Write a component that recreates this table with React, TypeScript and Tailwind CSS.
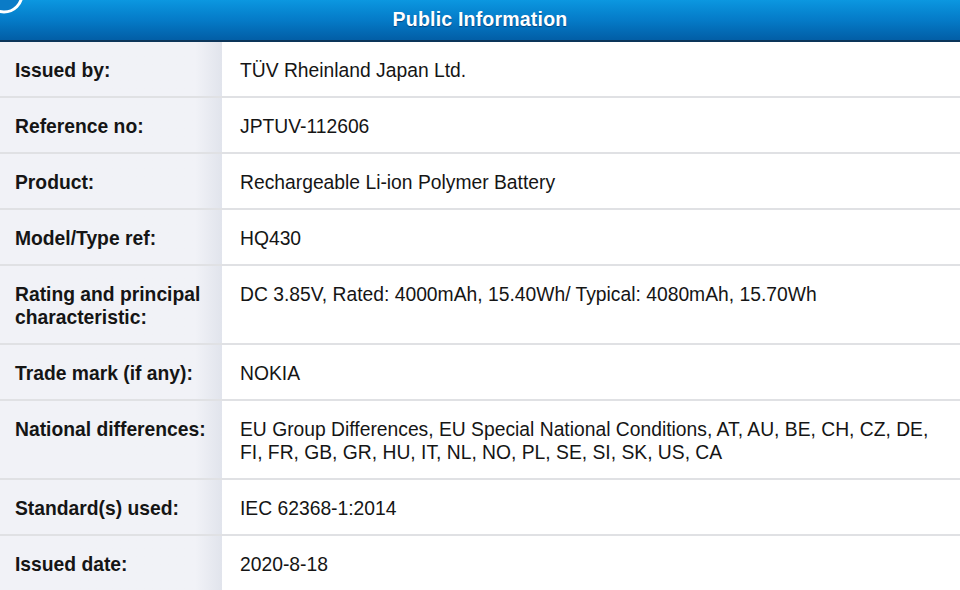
import React from "react";

type Row = { label: string; value: string };

const rows: Row[] = [
  { label: "Issued by:", value: "TÜV Rheinland Japan Ltd." },
  { label: "Reference no:", value: "JPTUV-112606" },
  { label: "Product:", value: "Rechargeable Li-ion Polymer Battery" },
  { label: "Model/Type ref:", value: "HQ430" },
  {
    label: "Rating and principal characteristic:",
    value: "DC 3.85V, Rated: 4000mAh, 15.40Wh/ Typical: 4080mAh, 15.70Wh",
  },
  { label: "Trade mark (if any):", value: "NOKIA" },
  {
    label: "National differences:",
    value:
      "EU Group Differences, EU Special National Conditions, AT, AU, BE, CH, CZ, DE, FI, FR, GB, GR, HU, IT, NL, NO, PL, SE, SI, SK, US, CA",
  },
  { label: "Standard(s) used:", value: "IEC 62368-1:2014" },
  { label: "Issued date:", value: "2020-8-18" },
];

const Header = () => {
  return (
    <div className="relative h-[42px] bg-linear-to-b from-[#0c97e0] via-[#057bc8] to-[#025ea6] border-b-2 border-[#0c3559] flex items-center justify-center">
      {/* round badge cut off at the corner */}
      <svg className="absolute left-0 top-0" width="30" height="20" viewBox="0 0 30 20">
        <circle cx="4" cy="-6" r="18" fill="#0a7bc7" stroke="#ffffff" strokeWidth="3" />
      </svg>
      <span className="text-white font-bold text-[19.5px] tracking-[0.2px] [text-shadow:0_1px_1px_rgba(0,40,90,0.6)]">
        Public Information
      </span>
    </div>
  );
};

export default function App() {
  return (
    <div
      className="w-[960px] h-[590px] overflow-hidden bg-white text-[#151515]"
      style={{ fontFamily: '"Liberation Sans", Arial, sans-serif' }}
    >
      <Header />
      <div className="flex flex-col">
        {rows.map((row, idx) => (
          <div key={idx} className="flex border-b-2 border-[#e0e1e4]">
            <div className="w-[222px] shrink-0 pl-[15px] pr-2 pt-[17px] pb-[14px] bg-linear-to-r from-[#f1f2f7] from-88% to-[#e1e4ec] font-bold text-[19.3px] leading-[23px]">
              {row.label}
            </div>
            <div className="flex-1 pl-[18px] pr-4 pt-[17px] pb-[14px] text-[19.3px] leading-[23px]">
              {row.value}
            </div>
          </div>
        ))}
      </div>
    </div>
  );
}
